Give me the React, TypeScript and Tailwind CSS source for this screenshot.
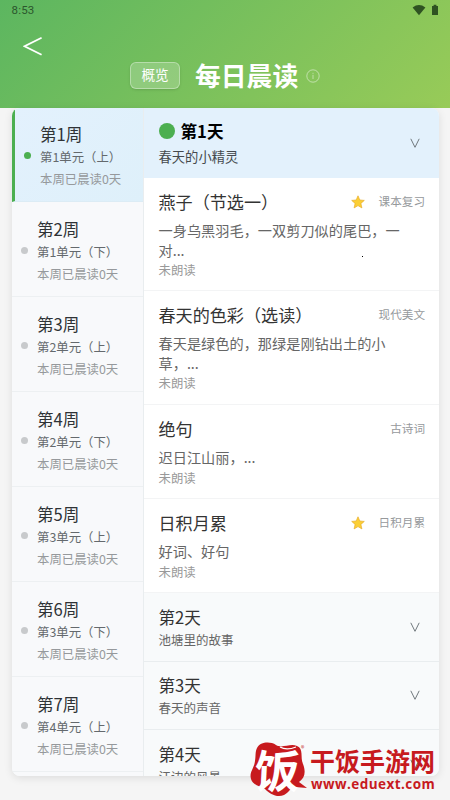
import { Fragment } from "react";

const weeks = [
  { title: "第1周", unit: "第1单元（上）" },
  { title: "第2周", unit: "第1单元（下）" },
  { title: "第3周", unit: "第2单元（上）" },
  { title: "第4周", unit: "第2单元（下）" },
  { title: "第5周", unit: "第3单元（上）" },
  { title: "第6周", unit: "第3单元（下）" },
  { title: "第7周", unit: "第4单元（上）" },
];

const lessons = [
  { title: "燕子（节选一）", lines: ["一身乌黑羽毛，一双剪刀似的尾巴，一", "对..."], tag: "课本复习", star: true, height: "h-[113px]" },
  { title: "春天的色彩（选读）", lines: ["春天是绿色的，那绿是刚钻出土的小", "草，..."], tag: "现代美文", star: false, height: "h-[114px]" },
  { title: "绝句", lines: ["迟日江山丽，..."], tag: "古诗词", star: false, height: "h-[94px]" },
  { title: "日积月累", lines: ["好词、好句"], tag: "日积月累", star: true, height: "h-[94px]" },
];

const days = [
  { title: "第2天", desc: "池塘里的故事" },
  { title: "第3天", desc: "春天的声音" },
  { title: "第4天", desc: "江边的风景" },
];

function Chevron() {
  return (
    <svg width="10" height="10" viewBox="0 0 10 10" fill="none" stroke="#70787d" strokeWidth="1">
      <path d="M0.8 0.8L5 9.3L9.2 0.8" />
    </svg>
  );
}

function Star() {
  return (
    <svg width="14" height="14" viewBox="0 0 14 14">
      <path
        d="M7 0.8L8.8 5L13.3 5.4L9.9 8.4L10.9 12.9L7 10.6L3.1 12.9L4.1 8.4L0.7 5.4L5.2 5Z"
        fill="#fbcf35"
        stroke="#e8ae2c"
        strokeWidth="0.7"
        strokeLinejoin="round"
      />
    </svg>
  );
}

function Header() {
  return (
    <header className="h-[107.5px] shrink-0 bg-[linear-gradient(135deg,#5cb660_0%,#98cb58_100%)]">
      <div className="flex h-5 items-center justify-between pl-[11.5px] pr-[11px]">
        <span className="pt-px font-['Roboto',sans-serif] text-[11.5px] leading-none tracking-[0.2px] text-[#2c562d]">8:53</span>
        <div className="flex items-center gap-[5px] text-[#2f5222]">
          <svg width="14" height="12" viewBox="0 0 14 12" fill="currentColor">
            <path d="M7 11.3L0.6 3.4Q7 -1.4 13.4 3.4Z" />
          </svg>
          <svg width="8" height="12" viewBox="0 0 8 12" fill="currentColor">
            <path d="M1 2H2.6V0.8H5.4V2H7V11H1Z" />
          </svg>
        </div>
      </div>
      <div className="flex h-[42px] items-center pl-[23px] pt-[10px]">
        <svg width="20" height="20" viewBox="0 0 20 20" fill="none" stroke="white" strokeWidth="1.8">
          <path d="M18.6 1.8L1.6 10.3L18.6 18.8" />
        </svg>
      </div>
      <div className="flex h-[27px] items-center pl-[130px]">
        <button className="h-[27px] w-[50px] rounded-[6px] border border-white/35 bg-white/20 pb-[2px] text-[13.6px] leading-[23px] text-white shadow-sm">
          概览
        </button>
        <h1 className="ml-[15px] pb-[2px] text-[25.8px] font-bold leading-[27px] text-white">每日晨读</h1>
        <svg className="ml-2" width="14" height="14" viewBox="0 0 14 14" fill="none" stroke="white" strokeOpacity="0.6" strokeWidth="0.8">
          <circle cx="7" cy="7" r="6.2" />
          <path d="M7 3.8V4.8M7 5.8V10" />
        </svg>
      </div>
    </header>
  );
}

function WeekList() {
  return (
    <aside className="w-[132px] shrink-0 border-r border-[#e9edef] bg-[#f8f9fb]">
      {weeks.map((week, i) => (
        <div
          key={week.title}
          className={
            i === 0
              ? "flex h-[94px] border-b border-[#dcecf5] border-l-[3px] border-l-[#4caf50] bg-[linear-gradient(135deg,#e3f1fd,#def0fa)] pl-[9px] pt-[14px]"
              : "flex h-[95px] border-b border-[#edf0f2] pl-[9px] pt-[15px]"
          }
        >
          <span
            className={
              i === 0
                ? "mt-[30px] size-[7px] shrink-0 rounded-full bg-[#4caf50]"
                : "mt-[30px] size-[7px] shrink-0 rounded-full bg-[#c8cacc]"
            }
          />
          <div className="ml-[9px] whitespace-nowrap">
            <div className="text-[16.6px] leading-[25px] text-[#2f3336]">{week.title}</div>
            <div className="text-[12.4px] leading-[21px] text-[#64696d]">{week.unit}</div>
            <div className="text-[12.4px] leading-[22px] text-[#96999c]">本周已晨读0天</div>
          </div>
        </div>
      ))}
    </aside>
  );
}

function LessonList() {
  return (
    <>
      {lessons.map((lesson) => (
        <div key={lesson.title} className={`${lesson.height} shrink-0 border-b border-[#f3f4f5] bg-white pl-[14.5px] pr-[14px] pt-[11px]`}>
          <div className="flex h-[25px] items-center">
            <span className="text-[17.1px] leading-[25px] text-[#333]">{lesson.title}</span>
            <span className="ml-auto flex items-center gap-[14px] text-[11.6px] leading-[25px] text-[#96999c]">
              {lesson.star && <Star />}
              {lesson.tag}
            </span>
          </div>
          <p className="mt-[7px] whitespace-nowrap text-[14.2px] leading-[19.5px] text-[#666]">
            {lesson.lines.map((line) => (
              <Fragment key={line}>
                {line}
                <br />
              </Fragment>
            ))}
          </p>
          <div className="text-[12.4px] leading-[20px] text-[#999]">未朗读</div>
        </div>
      ))}
    </>
  );
}

function DayList() {
  return (
    <main className="flex min-w-0 flex-1 flex-col">
      <div className="flex h-[70px] shrink-0 items-center justify-between bg-[#e3f1fc] pl-[14.5px] pr-[19px]">
        <div className="pt-[2px]">
          <div className="flex items-center gap-[6px]">
            <span className="size-4 rounded-full bg-[#4caf50]" />
            <span className="text-[16.6px] font-bold leading-[25px] text-black">第1天</span>
          </div>
          <div className="text-[13.3px] leading-[26px] text-[#45494d]">春天的小精灵</div>
        </div>
        <Chevron />
      </div>
      <LessonList />
      {days.map((day) => (
        <div key={day.title} className="flex h-[68.5px] shrink-0 items-center justify-between border-b border-[#e9edef] bg-[#f8fafb] pl-[14.5px] pr-[19px]">
          <div className="pt-[2px]">
            <div className="text-[16.6px] leading-[24px] text-[#333]">{day.title}</div>
            <div className="text-[12.5px] leading-[22px] text-[#666]">{day.desc}</div>
          </div>
          <Chevron />
        </div>
      ))}
    </main>
  );
}

function Watermark() {
  return (
    <div className="absolute left-[249px] top-[741px] flex text-[#c71a1e]">
      <div className="relative h-[58px] w-[61px]">
        <svg width="61" height="58" viewBox="0 0 61 58">
          <path
            d="M8 7C11 1 21 0 27 4C33 8 41 2 48 5C55 8 51 16 54 23C57 31 56 37 50 41L58 47L46 46C41 46 41 51 35 54C28 57 21 53 16 48C12 45 4 45 2 38C0 31 5 28 6 20C7 14 6 11 8 7Z"
            fill="#c71a1e"
          />
          <path d="M31 6C36 9 42 8 47 6" fill="none" stroke="white" strokeWidth="1.2" />
        </svg>
        <span className="absolute left-[6px] top-[6px] -skew-x-3 text-[45px] font-bold leading-[43px] text-white">饭</span>
        <span className="absolute left-[52px] top-[4px] text-[7px] leading-[7px]">®</span>
      </div>
      <div className="pt-[4px]">
        <div className="whitespace-nowrap text-[25px] font-bold leading-[30px]">干饭手游网</div>
        <div className="mt-px pl-px font-['Open_Sans',sans-serif] text-[13.5px] font-bold leading-[16px] tracking-[0.45px]">www.eduext.com</div>
      </div>
    </div>
  );
}

export default function App() {
  return (
    <div className="relative flex h-[800px] w-[450px] flex-col overflow-hidden bg-[#f5f5f5] font-['Noto_Sans_CJK_SC',sans-serif]">
      <Header />
      <div className="ml-3 mt-[0.5px] flex h-[668px] w-[427px] overflow-hidden rounded-[8px] bg-[#f8fafb] shadow-[0_2px_8px_rgba(0,0,0,0.1)]">
        <WeekList />
        <DayList />
      </div>
      <Watermark />
      {/* stray pointer dot */}
      <span className="absolute left-[362px] top-[256px] size-px bg-black" />
    </div>
  );
}
